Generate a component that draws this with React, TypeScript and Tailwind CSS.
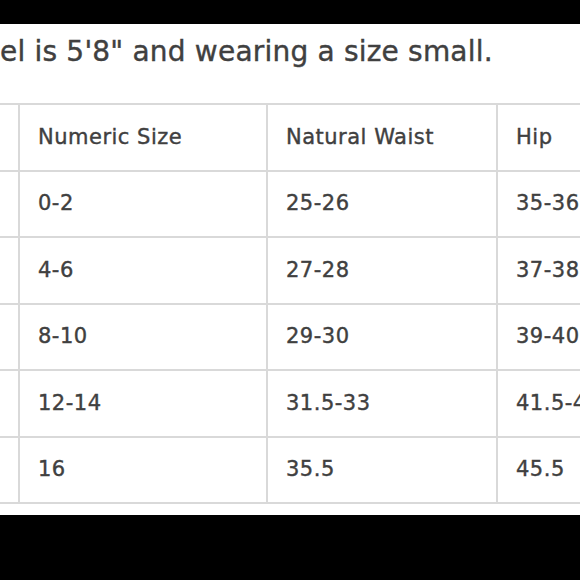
const rows = [
  ["Numeric Size", "Natural Waist", "Hip"],
  ["0-2", "25-26", "35-36"],
  ["4-6", "27-28", "37-38"],
  ["8-10", "29-30", "39-40"],
  ["12-14", "31.5-33", "41.5-43"],
  ["16", "35.5", "45.5"],
];

export default function App() {
  return (
    <div className="w-[580px] h-[580px] bg-white overflow-hidden flex flex-col font-['DejaVu_Sans',sans-serif] text-[#404040] [-webkit-text-stroke:0.4px_#404040]">
      <div className="h-6 bg-black shrink-0" />
      <p className="mt-[12px] h-[32px] leading-[32px] text-[28px] tracking-[0.2px] whitespace-nowrap">
        el is 5'8" and wearing a size small.
      </p>
      <div className="mt-[35px] border-t-2 border-[#d9d9d9]">
        {rows.map((r, i) => (
          <div key={i} className="grid grid-cols-[20px_248px_230px_1fr] h-[66.5px]">
            <div className="border-r-2 border-b-2 border-[#d9d9d9]" />
            {r.map((c, j) => (
              <div
                key={j}
                className={`flex items-center pl-[18px] text-[21px] tracking-[0.5px] whitespace-nowrap overflow-hidden border-b-2 border-[#d9d9d9] ${
                  j < 2 ? "border-r-2" : ""
                }`}
              >
                {c}
              </div>
            ))}
          </div>
        ))}
      </div>
      <div className="flex-1" />
      <div className="h-[65px] bg-black shrink-0" />
    </div>
  );
}
